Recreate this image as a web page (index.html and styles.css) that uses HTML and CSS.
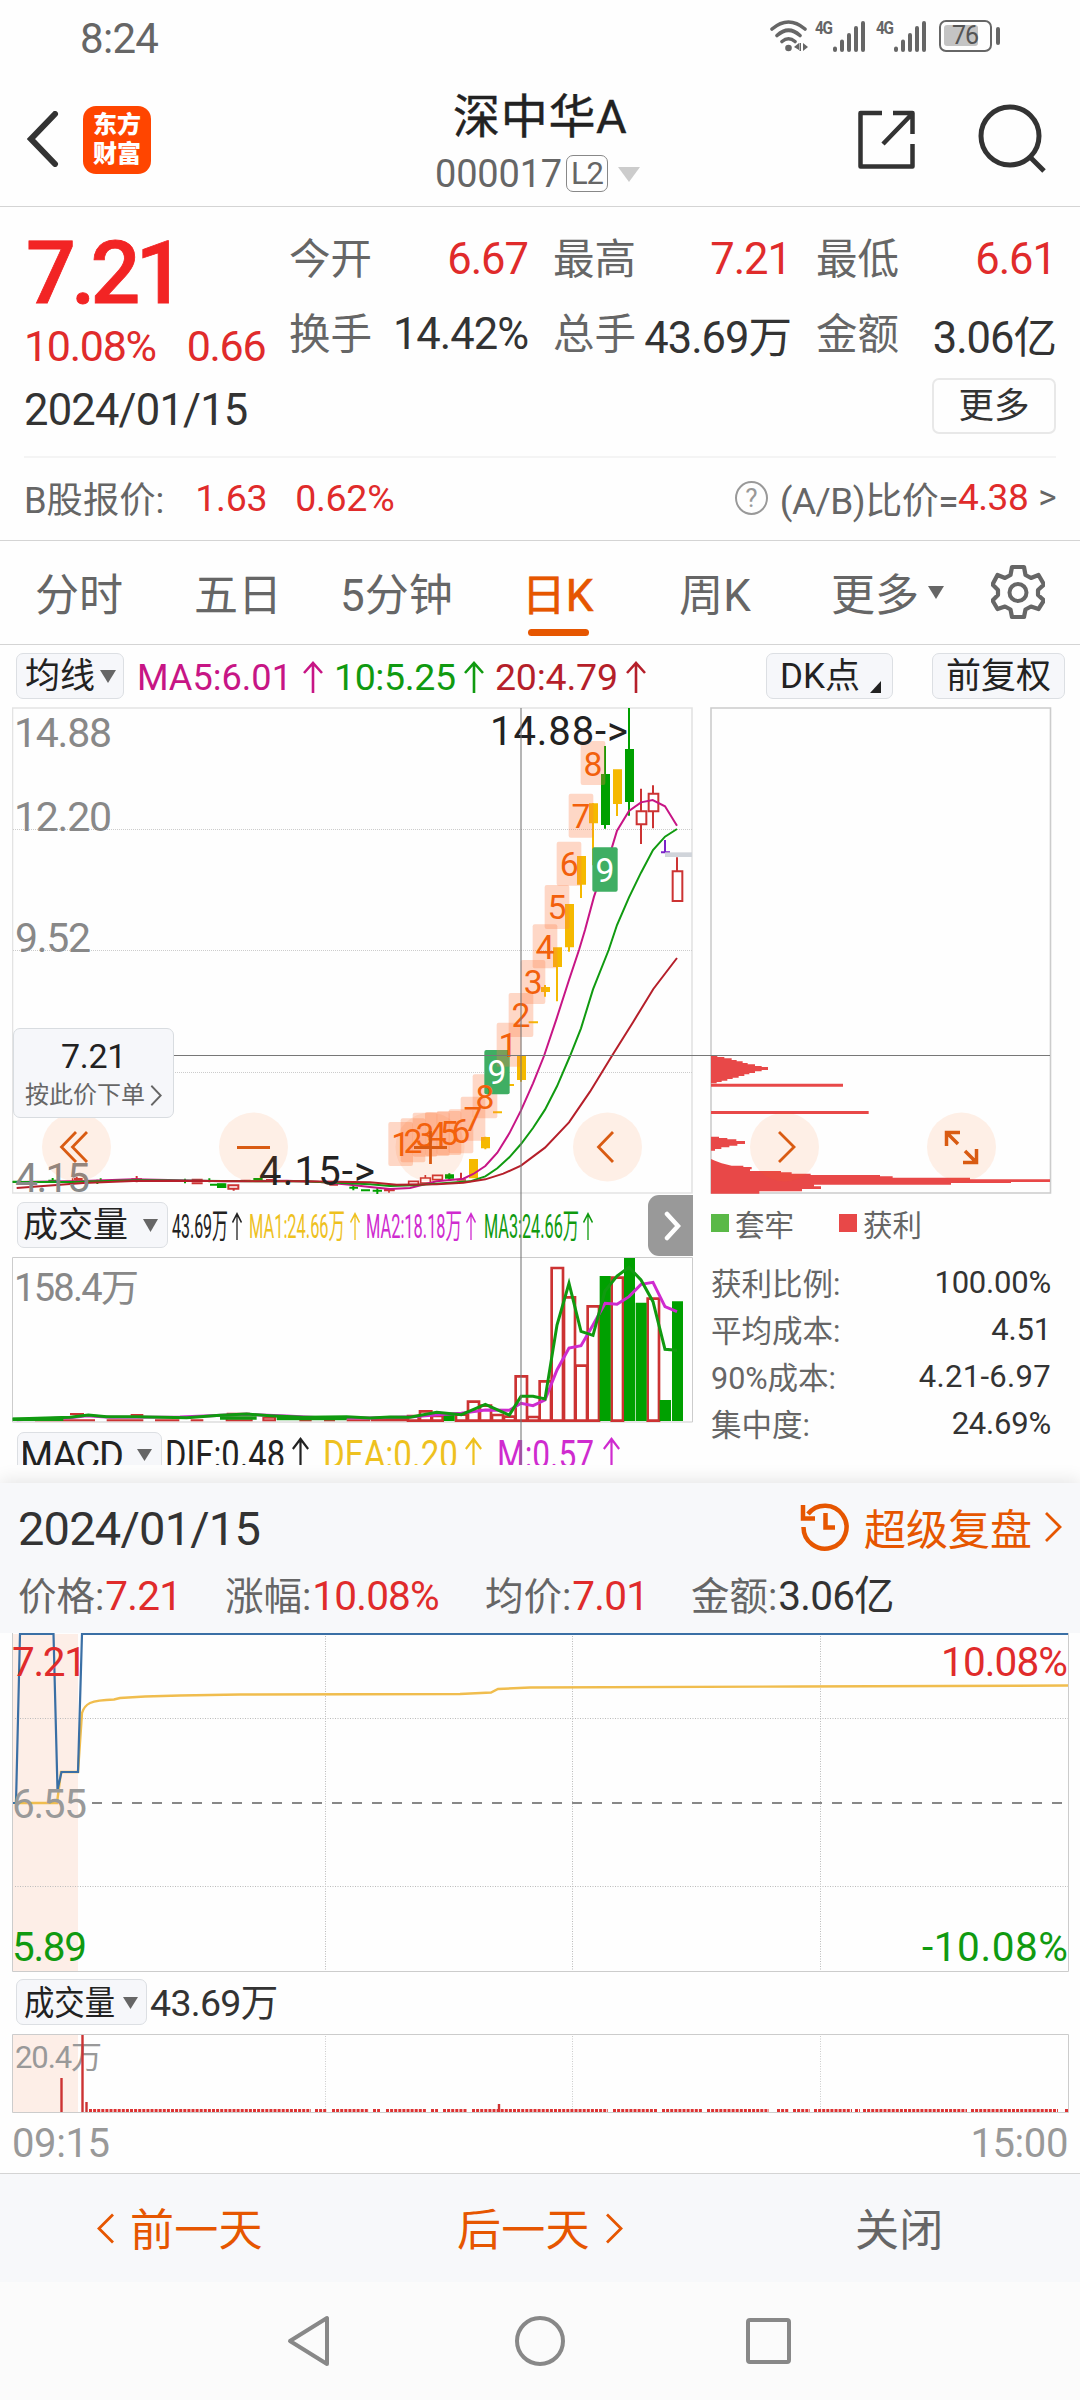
FILE: index.html
```html
<!DOCTYPE html>
<html lang="zh-CN">
<head>
<meta charset="utf-8">
<meta name="viewport" content="width=1080">
<title>深中华A 000017</title>
<link rel="stylesheet" href="styles.css">
</head>
<body>
<svg class="defs" width="0" height="0">
  <symbol id="up" viewBox="0 0 20 32" preserveAspectRatio="none"><path d="M10 32V2M1 12L10 2L19 12" fill="none" stroke="currentColor" stroke-width="2.6"/></symbol>
  <symbol id="next" viewBox="0 0 18 30"><path d="M2 1L16 15L2 29" fill="none" stroke="currentColor" stroke-width="2.8"/></symbol>
  <symbol id="signal" viewBox="0 0 34 32"><path d="M3 28.5V30M10 21.500V30M17 15V30M24 8V30M31 3V30" fill="none" stroke="#666" stroke-width="4" stroke-linecap="round"/></symbol>
</svg>

<header class="status">
  <span class="clock">8:24</span>
  <div class="status-icons">
    <svg width="40" height="34" viewBox="0 0 40 34"><g fill="none" stroke="#666" stroke-width="3.600" stroke-linecap="round"><path d="M3 10Q19.500 -4 36 10M8 16.500Q19.500 6 31 16.500M13 22.500Q19.500 17 26 22.500"/></g><circle cx="19.500" cy="29" r="3.300" fill="#666"/><path d="M25 28L30 24V31ZM39 28L34 24V32ZM30.500 24H32V32H30.500Z" fill="#666"/></svg>
    <span class="net">4G</span>
    <svg class="bars" width="34" height="32"><use href="#signal"/></svg>
    <span class="net second">4G</span>
    <svg class="bars" width="34" height="32"><use href="#signal"/></svg>
    <span class="battery"><span>76</span></span>
  </div>
</header>

<nav class="titlebar">
  <svg class="back" width="32" height="56" viewBox="0 0 32 56"><path d="M28 3L4 28L28 53" fill="none" stroke="#333" stroke-width="6" stroke-linecap="round"/></svg>
  <div class="logo">东方<br>财富</div>
  <div class="stock">
    <h1>深中华A</h1>
    <div class="code"><span>000017</span><i>L2</i><svg width="22" height="15"><path d="M0 0H22L11 15Z" fill="#ccc"/></svg></div>
  </div>
  <svg class="share" width="60" height="60" viewBox="0 0 60 60"><path d="M25 3H3.500V56.500H55.500V34M36 3H55.500V24M55 4L26 34" fill="none" stroke="#333" stroke-width="4.500" stroke-linejoin="round"/></svg>
  <svg class="search" width="72" height="72" viewBox="0 0 72 72"><circle cx="32" cy="32" r="29" fill="none" stroke="#333" stroke-width="5"/><path d="M52 53L66 67" stroke="#333" stroke-width="5"/></svg>
</nav>

<section class="quote">
  <div class="quote-top">
    <div class="price">
      <strong>7.21</strong>
      <div class="change"><span>10.08%</span><span>0.66</span></div>
    </div>
    <dl class="stats">
      <div><dt>今开</dt><dd class="red">6.67</dd></div>
      <div><dt>最高</dt><dd class="red">7.21</dd></div>
      <div><dt>最低</dt><dd class="red">6.61</dd></div>
      <div><dt>换手</dt><dd>14.42%</dd></div>
      <div><dt>总手</dt><dd>43.69万</dd></div>
      <div><dt>金额</dt><dd>3.06亿</dd></div>
    </dl>
  </div>
  <div class="date-row"><span>2024/01/15</span><button>更多</button></div>
  <div class="b-row">
    <span class="b-label">B股报价:</span><span class="red b-price">1.63</span><span class="red">0.62%</span>
    <span class="ratio"><i>?</i>(A/B)比价=<b>4.38</b><em>&gt;</em></span>
  </div>
</section>

<nav class="tabs">
  <span>分时</span><span>五日</span><span>5分钟</span><span class="active">日K</span><span>周K</span>
  <span class="more">更多<svg width="16" height="13"><path d="M0 0H16L8 13Z" fill="#666"/></svg></span>
  <svg class="gear" width="54" height="56" viewBox="0 0 54 56"><path d="M21 3H33L34.500 11L40 14L47.500 11L53 20.500L47 26V31L53 36.500L47.500 45L40 42.500L34.500 45.500L33 53H21L19.500 45.500L14 42.500L6.500 45L1.500 36.500L7 31V26L1.500 20.500L6.500 11L14 14L19.500 11Z" fill="none" stroke="#666" stroke-width="4.200" stroke-linejoin="round"/><circle cx="27" cy="28.500" r="8.500" fill="none" stroke="#666" stroke-width="4"/></svg>
</nav>

<div class="ma-bar">
  <button class="chip ma-chip">均线<svg width="16" height="13"><path d="M0 0H16L8 13Z" fill="#666"/></svg></button>
  <svg class="ma-values" width="520" height="62" viewBox="139 645 520 62" font-size="37.500">
    <g fill="#c71585" color="#c71585"><text x="137" y="690" textLength="155" lengthAdjust="spacingAndGlyphs">MA5:6.01</text><use href="#up" x="303" y="661" width="20" height="32"/></g>
    <g fill="#109a10" color="#109a10"><text x="334" y="690" textLength="122">10:5.25</text><use href="#up" x="464" y="661" width="20" height="32"/></g>
    <g fill="#b51f2a" color="#b51f2a"><text x="495" y="690" textLength="123">20:4.79</text><use href="#up" x="626" y="661" width="20" height="32"/></g>
  </svg>
  <button class="chip dk-chip">DK点<svg width="11" height="12"><path d="M11 0V12H0Z" fill="#222"/></svg></button>
  <button class="chip fq-chip">前复权</button>
</div>

<section class="kline">
  <div class="left">
    <svg class="candles" width="681" height="487" viewBox="12 707 681 487">
      <path d="M12.500 708H692V1193H12.500Z" fill="none" stroke="#e3e3e3" stroke-width="1.600"/>
      <path d="M13 829.500H692M13 950.500H692M13 1072.500H692" stroke="#ccc" stroke-dasharray="1 1"/>
      <g transform="translate(370 950) scale(.33333)">
        <g stroke-width="6">
          <path d="M705 -612V-364M777 -726V-403" stroke="#00a000"/>
          <path d="M741 -540V-402M669 -440V-254M633 -280V-156M597 -130V5M561 0V154M525 105V140M453 320V395M346 560V598M476 217H504M417 405H432M369 487H396" stroke="#f5b900"/>
          <path d="M813 -484V-417M813 -376V-318M849 -494V-470M849 -416V-365M921 -278V-235M273 668V690" stroke="#c33"/>
          <path d="M885 -330V-292M873 -293H900" stroke="#7b22c9" stroke-width="6"/>
        </g>
        <path d="M885 -293H966V-279H885Z" fill="#d0d4da"/>
        <path d="M693 -528H720V-375H693ZM765 -603H792V-444H765Z" fill="#00a000"/>
        <path d="M729 -542H756V-438H729ZM657 -440H684V-380H657ZM621 -282H648V-196H621ZM585 -138H612V-8H585ZM549 -8H576V51H549ZM513 111H540V126H513ZM441 316H468V390H441ZM333 561H360V595H333ZM297 627H324V685H297Z" fill="#f5b900"/>
        <path d="M800 -416H829V-377H800ZM836 -469H865V-416H836ZM908 -236H937V-147H908Z" fill="#fff" stroke="#c33" stroke-width="6"/>
        <g fill="none" stroke="#c33" stroke-width="5"><path d="M116 694H145V704H116ZM152 684H181V699H152ZM188 676H217V689H188ZM166 675V684M260 690H288M42 721H74M57 717V728M-892 685V700"/></g>
        <path d="M225 673H252V686H225ZM-459 700H-431V714H-459Z" fill="#00a000"/>
        <path d="M-1072 695H-1045M-965 692H-940M-952 684V698M-818 689V702M-808 685V698M-855 694H-834M-570 693H-540M-555 686V700M-482 685V697M-350 687H-322M-480 704H-435M-62 713H-36M-50 705V721M-27 721H0M8 722H36M22 714V732M238 670V690" stroke="#00a000" stroke-width="6"/>
        <path d="M-888 687H-862M-880 680V694M-716 688H-684M-700 678V697M-535 689H-502M-535 700H-502M-425 706H-395V716H-425ZM-409 718V722M-388 692H-358M-312 690H-282M-124 697H-94M-122 704H-96M43 720H73" fill="none" stroke="#c33" stroke-width="6"/>
        <g fill="none" stroke-width="6">
          <path d="M-1060 696L-860 693L-710 688L-570 691L-440 694L-250 692L-150 696L-60 704L0 711L60 717L120 714L200 694L280 686L310 672L346 648L382 608L418 550L453 481L489 400L522 318L560 205L597 90L627 0L645 -60L672 -160L700 -242L725 -305L741 -358L777 -417L813 -443L848 -450L885 -431L921 -373" stroke="#c71585"/>
          <path d="M-1072 696H-900L-700 691L-440 693L-200 694L0 703L60 708L130 706L220 700L300 694L346 679L382 655L418 622L453 582L489 534L525 479L561 409L600 318L633 235L669 118L716 0L741 -75L777 -158L813 -232L849 -300L885 -340L921 -363" stroke="#109a10"/>
          <path d="M-1060 714L-860 699L-710 693H-500L-200 694L0 697L80 704L200 703L280 698L346 688L400 671L453 647L525 593L597 517L660 425L727 316L790 215L850 117L921 24" stroke="#b51f2a"/>
        </g>
        <g fill="#ff7f45" fill-opacity=".3">
          <rect x="55" y="516" width="74" height="132" rx="6"/><rect x="92" y="505" width="74" height="132" rx="6"/><rect x="128" y="488" width="74" height="132" rx="6"/><rect x="165" y="486" width="74" height="132" rx="6"/><rect x="200" y="483" width="74" height="132" rx="6"/><rect x="236" y="478" width="74" height="132" rx="6"/><rect x="272" y="440" width="74" height="132" rx="6"/><rect x="308" y="373" width="74" height="132" rx="6"/><rect x="380" y="218" width="74" height="132" rx="6"/><rect x="416" y="129" width="74" height="132" rx="6"/><rect x="452" y="30" width="74" height="132" rx="6"/><rect x="488" y="-77" width="74" height="132" rx="6"/><rect x="524" y="-195" width="74" height="132" rx="6"/><rect x="560" y="-325" width="74" height="132" rx="6"/><rect x="596" y="-469" width="74" height="132" rx="6"/><rect x="632" y="-627" width="74" height="132" rx="6"/>
        </g>
        <g fill="#3fae63"><rect x="343" y="300" width="76" height="133" rx="6"/><rect x="667" y="-308" width="76" height="133" rx="6"/></g>
        <rect x="380" y="300" width="38" height="50" fill="#ff7f45" fill-opacity=".3"/>
        <g fill="#f2600c" font-size="101" text-anchor="middle">
          <text x="92" y="617">1</text><text x="129" y="608">2</text><text x="165" y="590">3</text><text x="202" y="588">4</text><text x="237" y="586">5</text><text x="273" y="580">6</text><text x="309" y="542">7</text><text x="345" y="476">8</text><text x="414" y="320">1</text><text x="453" y="232">2</text><text x="490" y="133">3</text><text x="525" y="26">4</text><text x="561" y="-92">5</text><text x="598" y="-222">6</text><text x="633" y="-366">7</text><text x="669" y="-523">8</text>
          <text x="381" y="402" fill="#fff">9</text><text x="705" y="-205" fill="#fff">9</text>
        </g>
      </g>
      <g font-size="41" fill="#888">
        <text x="14" y="747" textLength="98">14.88</text><text x="14" y="831" textLength="98">12.20</text><text x="15" y="952" textLength="76">9.52</text><text x="15" y="1192" textLength="75">4.15</text>
      </g>
      <g font-size="40" fill="#222"><text x="490" y="745" textLength="138">14.88-&gt;</text><text x="259" y="1185" textLength="116">4.15-&gt;</text></g>
    </svg>

    <div class="indicator">
      <button class="chip vol-chip">成交量<svg width="15" height="13"><path d="M0 0H15L7.500 13Z" fill="#666"/></svg></button>
      <svg class="legend" width="430" height="46" viewBox="170 1202 430 46" font-size="34">
        <text x="172" y="1238" textLength="56" lengthAdjust="spacingAndGlyphs" fill="#222">43.69万</text><use href="#up" x="232" y="1212" width="10" height="28" color="#222"/>
        <text x="249" y="1238" textLength="96" lengthAdjust="spacingAndGlyphs" fill="#eec11f">MA1:24.66万</text><use href="#up" x="350" y="1212" width="10" height="28" color="#eec11f"/>
        <text x="366" y="1238" textLength="96" lengthAdjust="spacingAndGlyphs" fill="#cf2bcf">MA2:18.18万</text><use href="#up" x="466" y="1212" width="10" height="28" color="#cf2bcf"/>
        <text x="484" y="1238" textLength="95" lengthAdjust="spacingAndGlyphs" fill="#109a10">MA3:24.66万</text><use href="#up" x="583" y="1212" width="10" height="28" color="#109a10"/>
      </svg>
      <span class="expand"><svg width="17" height="30" viewBox="0 0 17 30"><path d="M3 3L14 15L3 27" fill="none" stroke="#fff" stroke-width="4.500" stroke-linecap="round"/></svg></span>
    </div>

    <svg class="volume" width="681" height="167" viewBox="12 1256 681 167">
      <path d="M12.500 1257.500H692.500V1422H12.500Z" fill="none" stroke="#ccc"/>
      <text x="14" y="1301" font-size="38" fill="#888" textLength="125">158.4万</text>
      <g transform="translate(370 1190) scale(.33333)">
        <g fill="#fff" stroke="#c33" stroke-width="8">
          <path d="M6 690H108V686H6ZM114 678H146V692H114ZM150 664H184V692H150ZM186 678H218V692H186ZM258 674H290V692H258ZM294 635H327V692H294ZM330 647H363V692H330ZM366 675H399V692H366ZM402 680H435V692H402ZM437 559H471V692H437ZM473 681H507V692H473ZM509 574H543V692H509ZM545 234H579V692H545ZM582 322H615V692H582ZM617 527H651V692H617ZM653 349H687V692H653ZM725 263H759V692H725ZM833 326H867V692H833Z"/>
          <path d="M-1005 691H-825M-790 691H-680M-645 691H-572M-538 691H-500M-430 683H-355V691H-430ZM-320 683H-285V691H-320ZM-212 691H-175M-138 691H-105M-70 691H0M-900 672H-858M-718 675H-680M-430 671H-360" fill="none" stroke-width="6"/>
        </g>
        <path d="M689 258H722V693H689ZM762 204H795V693H762ZM797 338H830V693H797ZM869 630H903V693H869ZM906 334H939V693H906ZM221 672H254V693H221Z" fill="#00a000"/>
        <g fill="none" stroke-width="9">
          <path d="M-1060 689L-900 683L-850 677L-780 682L-570 681L-370 673L-250 678L-150 683L0 684L130 680L202 674L274 670L346 660L418 661L453 640L489 647L525 630L561 540L597 474L633 467L669 405L705 340L741 343L777 320L813 283L849 277L885 350L921 365" stroke="#cf2bcf"/>
          <path d="M-1072 687L-900 682L-845 675L-790 680H-700L-550 683L-450 676L-370 672L-300 677L-200 682L-70 680L0 684L60 681L120 682L200 667L274 674L346 643L418 675L453 619H489L525 627L561 405L597 280L633 424L669 436L705 303L741 258L777 232L813 270L849 335L885 478L921 481" stroke="#109a10"/>
          <path d="M-1072 688H-920M-450 684H-340M-280 686H-70" stroke="#109a10" stroke-width="10"/>
        </g>
      </g>
    </svg>

    <div class="indicator macd">
      <button class="chip macd-chip"><svg width="136" height="44" viewBox="24 1433 136 44"><text x="21" y="1469" font-size="38" fill="#222" textLength="104">MACD</text><path d="M138 1449H153L145.500 1461Z" fill="#666"/></svg></button>
      <svg class="legend" width="460" height="46" viewBox="164 1432 460 46" font-size="38">
        <text x="164" y="1468" textLength="120" lengthAdjust="spacingAndGlyphs" fill="#222">DIF:0.48</text><use href="#up" x="291" y="1437" width="17" height="32" color="#222"/>
        <text x="322" y="1468" textLength="135" lengthAdjust="spacingAndGlyphs" fill="#eec11f">DEA:0.20</text><use href="#up" x="464" y="1437" width="17" height="32" color="#eec11f"/>
        <text x="496" y="1468" textLength="97" lengthAdjust="spacingAndGlyphs" fill="#cf2bcf">M:0.57</text><use href="#up" x="602" y="1437" width="17" height="32" color="#cf2bcf"/>
      </svg>
    </div>
  </div>

  <aside class="cost">
    <svg width="342" height="487" viewBox="710 707 342 487">
      <path d="M711 708H1050.500V1193H711Z" fill="none" stroke="#ccc" stroke-width="1.600"/>
      <g transform="translate(690 1000) scale(.33333)" fill="#e84848">
        <path d="M63 167H82V171H103V175H125V180H140V184H158V189H173V193H195V198H215V201H234V210H215V214H195V219H178V223H163V228H146V233H128V237H112V242H95V246H80V250H63ZM63 251H459V260H63ZM63 333H536V342H63ZM63 410H87V414H112V418H139V423H165V432H142V437H118V442H94V447H75V452H63ZM63 477L75 482L95 490L125 497H160V501H185V508H180V513H273V517H305V521H362V525H570V529H608V533H840V538H1080V546H963V549H783V554H372V559H393V567H336V574H208V581H63Z"/>
      </g>
    </svg>
    <div class="keys"><span class="key green">套牢</span><span class="key">获利</span></div>
    <dl>
      <div><dt>获利比例:</dt><dd>100.00%</dd></div>
      <div><dt>平均成本:</dt><dd>4.51</dd></div>
      <div><dt>90%成本:</dt><dd class="range">4.21-6.97</dd></div>
      <div><dt>集中度:</dt><dd>24.69%</dd></div>
    </dl>
  </aside>

  <svg class="overlay" width="1080" height="758" viewBox="0 707 1080 758">
    <path d="M521 708V1465" stroke="#777" stroke-opacity=".6" stroke-width="1.800"/>
    <path d="M13 1055.500H1050" stroke="#777"/>
    <g fill="#ff6a13" fill-opacity=".1"><circle cx="76.500" cy="1147" r="34.500"/><circle cx="253.500" cy="1147" r="34.500"/><circle cx="430" cy="1147" r="34.500"/><circle cx="607.500" cy="1147" r="34.500"/><circle cx="784.500" cy="1147" r="34.500"/><circle cx="961.500" cy="1147" r="34.500"/></g>
    <g fill="none" stroke="#d95b12" stroke-width="2.800">
      <path d="M76 1132L61.500 1147L76 1162M87 1132L72.500 1147L87 1162M237 1147.500H270M414 1147.500H447M430.500 1131V1164M613 1132L598.500 1147L613 1162M779 1132L794 1147L779 1162"/>
      <path d="M958 1144L947 1133M946.500 1146V1132.500H960M965 1151L976 1162M963 1162.500H976.500V1149" stroke-width="3.500"/>
    </g>
  </svg>
  <button class="order"><b>7.21</b><span>按此价下单<svg width="12" height="21" viewBox="0 0 18 30" preserveAspectRatio="none"><use href="#next"/></svg></span></button>
</section>

<section class="replay">
  <div class="replay-head">
    <div class="replay-title">
      <span>2024/01/15</span>
      <a><svg width="50" height="50" viewBox="0 0 50 50"><path d="M3.500 25A21.500 21.500 0 1 0 8 12" fill="none" stroke="#e65600" stroke-width="4.500"/><path d="M3 3V16.500H15M25.500 11V25.500H35" fill="none" stroke="#e65600" stroke-width="4.500"/></svg><span>超级复盘</span><svg width="18" height="30"><use href="#next"/></svg></a>
    </div>
    <div class="replay-data">
      <span>价格:<b class="red">7.21</b></span><span>涨幅:<b class="red">10.08%</b></span><span>均价:<b class="red">7.01</b></span><span>金额:<b>3.06亿</b></span>
    </div>
  </div>
  <svg class="intraday" width="1080" height="339" viewBox="0 1633 1080 339">
    <path d="M13 1634H78V1971H13Z" fill="#fdeee7"/>
    <path d="M12.500 1633V1971.500H1068.500V1633" fill="none" stroke="#ccc"/>
    <path d="M15 1718.500H1068M15 1886.500H1068M325.500 1636V1971M572.500 1636V1971M820.500 1636V1971" stroke="#bbb" stroke-dasharray="1 1.500"/>
    <path d="M92 1803H1064" stroke="#888" stroke-width="2" stroke-dasharray="10 10"/>
    <path d="M16 1803H57L61 1772H78L82 1713Q84 1706 90 1703Q97 1700 114 1699.500L120 1698L145 1696.500L180 1695.500L240 1694.500L460 1694L491 1692.500L498 1689L530 1687.500L800 1686.500L1068 1685.500" fill="none" stroke="#f0bd4e" stroke-width="2.400"/>
    <path d="M13 1803H16L20 1634H53.500L57.500 1790L61.500 1772H78L82 1634H1068" fill="none" stroke="#3a6fa5" stroke-width="2.200"/>
    <g font-size="40.500"><text x="12" y="1676" textLength="75" fill="#e02b2b">7.21</text><text x="941" y="1676" textLength="127" fill="#e02b2b">10.08%</text><text x="12" y="1818" textLength="75" fill="#999">6.55</text><text x="12" y="1961" textLength="75" fill="#109a10">5.89</text><text x="922" y="1961" textLength="146" fill="#109a10">-10.08%</text></g>
  </svg>
  <div class="replay-vol">
    <button class="chip"><svg width="124" height="44" viewBox="20 1980 124 44"><text x="24" y="2015" font-size="34" fill="#222" textLength="91" lengthAdjust="spacingAndGlyphs">成交量</text><path d="M123 1997H138L130.500 2009Z" fill="#666"/></svg></button>
    <span>43.69万</span>
  </div>
  <svg class="minute-volume" width="1080" height="80" viewBox="0 2033 1080 80">
    <path d="M13 2034H78V2112H13Z" fill="#fdeee7"/>
    <path d="M12.500 2034.500H1068.500V2112.500H12.500Z" fill="none" stroke="#ccc"/>
    <path d="M325.500 2036V2112M572.500 2036V2112M820.500 2036V2112" stroke="#ccc" stroke-dasharray="1 1.500"/>
    <text x="15" y="2068" font-size="31" fill="#999" textLength="87">20.4万</text>
    <path d="M61.500 2078V2112M82.500 2035V2112M86.500 2102V2112M499 2104V2112" stroke="#c33" stroke-width="2.400"/>
    <path d="M89 2110.500H311M315 2110.500H327M332 2110.500H369M373 2110.500H380M386 2110.500H426M431 2110.500H438M443 2110.500H467M472 2110.500H608M613 2110.500H658M662 2110.500H703M707 2110.500H769M777 2110.500H789M793 2110.500H810M814 2110.500H852M855 2110.500H860M863 2110.500H967M971 2110.500H1058M1065 2110.500H1068" stroke="#d33" stroke-width="3" stroke-dasharray="3 1.100"/>
  </svg>
  <div class="times"><span>09:15</span><span>15:00</span></div>
</section>

<footer class="actions">
  <a class="prev"><svg class="flip" width="18" height="31"><use href="#next"/></svg><span>前一天</span></a>
  <a class="following"><span>后一天</span><svg width="18" height="31"><use href="#next"/></svg></a>
  <a class="close"><span>关闭</span></a>
</footer>

<div class="system-nav">
  <svg width="44" height="52" viewBox="0 0 44 52"><path d="M40 3V49L3 26Z" fill="none" stroke="#888" stroke-width="4" stroke-linejoin="round"/></svg>
  <svg width="52" height="52"><circle cx="26" cy="26" r="23" fill="none" stroke="#888" stroke-width="4"/></svg>
  <svg width="46" height="48"><rect x="2" y="3" width="41" height="42" rx="2" fill="none" stroke="#888" stroke-width="4"/></svg>
</div>
</body>
</html>
```

FILE: styles.css
```css
* { box-sizing: border-box; }
body { margin: 0; width: 1080px; height: 2400px; overflow: hidden; background: #fefefe; color: #333; font-family: Roboto, "Noto Sans CJK SC", sans-serif; display: flex; flex-direction: column; }
svg { display: block; flex: none; }
.defs { position: absolute; }
button { font: inherit; color: #222; background: none; margin: 0; padding: 0; }
i, em { font-style: normal; }
dl, dd, h1 { margin: 0; }
.red, b.red { color: #e02b2b; }

.status { height: 72px; flex: none; display: flex; justify-content: space-between; padding: 0 81px 0 80px; align-items: center; color: #666; }
.clock { font-size: 42px; line-height: 44px; padding-top: 5px; letter-spacing: -.7px; }
.status-icons { display: flex; align-items: flex-start; height: 34px; }
.status-icons > svg:first-child { margin-right: 6px; }
.net { width: 17px; font-size: 18px; font-weight: 700; line-height: 15px; letter-spacing: -1.500px; padding-top: 1px; transform: scaleX(.85); transform-origin: left; }
.bars { margin-top: 1px; }
.second { margin-left: 10px; }
.battery { position: relative; width: 53px; height: 32px; margin: 1px 7px 0 12px; border: 2.500px solid #666; border-radius: 7px; padding: 3px; }
.battery span { display: block; width: 34px; height: 21px; background: #c4c4c4; border-radius: 3px; color: #555; font-size: 25px; line-height: 22px; padding-left: 8px; letter-spacing: -1px; }
.battery::after { content: ""; position: absolute; right: -10px; top: 5px; width: 4px; height: 18px; border-radius: 2px; background: #666; }

.titlebar { height: 135px; flex: none; display: flex; align-items: flex-start; border-bottom: 1px solid #d4d4d4; padding-left: 27px; }
.back { margin-top: 39px; }
.logo { width: 68px; height: 68px; margin: 34px 0 0 24px; border-radius: 13px; background: #ff4500; color: #fff; text-align: center; font-weight: 900; font-size: 24px; line-height: 29px; padding-top: 5px; }
.stock { width: 260px; margin-left: 275px; }
h1 { font-size: 47px; line-height: 56px; font-weight: 400; color: #222; padding: 17px 0 0 27px; white-space: nowrap; letter-spacing: .7px; -webkit-text-stroke: .4px #222; }
.code { display: flex; align-items: center; margin: 7px 0 0 9px; color: #666; height: 44px; }
.code span { font-size: 38px; letter-spacing: -.2px; }
.code i { width: 42px; height: 37px; border: 1.500px solid #888; border-radius: 7px; font-size: 31px; line-height: 35px; text-align: center; margin: -1px 10px 0 4px; letter-spacing: -1px; }
.share { margin: 38px 0 0 171px; }
.search { margin: 32px 0 0 61px; }

.quote { height: 334px; flex: none; border-bottom: 1px solid #d4d4d4; padding: 0 24px; }
.quote-top { height: 168px; display: flex; }
.price { width: 265px; color: #f22424; flex: none; }
.price strong { display: block; font-size: 88px; line-height: 96px; font-weight: 500; letter-spacing: -5px; margin-top: 18px; padding-left: 2px; height: 96px; -webkit-text-stroke: .8px #f22424; }
.change { display: flex; font-size: 43px; line-height: 52px; color: #e02b2b; gap: 31px; letter-spacing: -1.300px; margin-top: -1px; }
.stats { flex: 1; display: grid; grid-template-columns: 239px 263px 265px; grid-template-rows: 75px 75px; column-gap: 0; padding-top: 15px; }
.stats div { display: flex; justify-content: space-between; align-items: center; white-space: nowrap; }
.stats div:nth-child(3n+2), .stats div:nth-child(3n) { padding-left: 25px; }
.stats dt { font-size: 41.500px; color: #666; margin: -6px 0 1px; }
.stats dd { font-size: 43.500px; letter-spacing: -1px; }
.date-row { display: flex; justify-content: space-between; height: 83px; border-bottom: 2px solid #f4f4f4; font-size: 43.500px; line-height: 71px; letter-spacing: -.8px; }
.date-row button { width: 124px; height: 56px; margin-top: 3px; border: 2px solid #e8e8e8; border-radius: 7px; font-size: 35.500px; line-height: 50px; letter-spacing: 0; color: #333; }
.b-row { height: 80px; display: flex; align-items: center; font-size: 37.500px; white-space: nowrap; letter-spacing: -.3px; color: #666; }
.b-label { font-size: 36.300px; letter-spacing: 0; margin-top: -3px; }
.b-price { margin: 0 28px 0 31px; }
.ratio { margin-left: auto; display: flex; align-items: center; font-size: 37px; letter-spacing: -.5px; margin-top: -1px; }
.ratio i { width: 33px; height: 34px; border: 2.500px solid #999; border-radius: 50%; margin-right: 12px; font-size: 26px; line-height: 30px; text-align: center; color: #999; }
.ratio b { font-weight: 400; color: #e02b2b; }
.ratio em { margin-left: 10px; font-size: 35px; }

.tabs { height: 104px; flex: none; display: flex; align-items: center; border-bottom: 1px solid #d4d4d4; font-size: 44px; color: #666; padding-left: 35px; line-height: 64px; }
.tabs > span { white-space: nowrap; position: relative; top: 3px; }
.tabs > span:nth-child(2) { margin-left: 71px; }
.tabs > span:nth-child(3) { margin-left: 58px; }
.tabs > span:nth-child(4) { margin-left: 69px; }
.tabs > span:nth-child(5) { margin-left: 86px; }
.tabs .active { color: #e65600; -webkit-text-stroke: .6px #e65600; }
.active::after { content: ""; position: absolute; left: 6px; bottom: -8px; width: 61px; height: 7px; border-radius: 4px; background: #e65600; }
.tabs .more { margin-left: 80px; display: flex; align-items: center; }
.more svg { margin-left: 9px; margin-top: -6px; }
.gear { margin-left: 47px; margin-top: -2px; }

.chip { height: 46px; border: 1.500px solid #dcdfe3; border-radius: 7px; background: #f6f7fa; font-size: 35px; line-height: 40px; display: flex; align-items: center; white-space: nowrap; flex: none; }
.ma-bar { height: 62px; flex: none; display: flex; padding-left: 16px; align-items: flex-start; }
.ma-bar .chip { margin-top: 8px; padding-top: 1px; }
.ma-chip { width: 108px; padding-left: 8px; }
.ma-chip svg { margin-left: 5px; }
.ma-values { margin-left: 15px; overflow: visible; }
.dk-chip { width: 127px; margin-left: 107px; padding-left: 13px; }
.dk-chip svg { margin: 21px 0 0 10px; }
.fq-chip { width: 133px; margin-left: 39px; justify-content: center; }

.kline { height: 758px; flex: none; display: flex; position: relative; overflow: hidden; }
.left { width: 693px; flex: none; }
.candles, .volume { margin-left: 12px; }
.indicator { height: 62px; display: flex; padding: 8px 0 0 17px; }
.vol-chip { width: 151px; padding: 1px 0 0 5px; }
.vol-chip svg { margin-left: 15px; }
.legend { margin-left: 2px; overflow: visible; }
.expand { width: 45px; height: 61px; margin: -7px 0 0 48px; background: #999; border-radius: 11px 0 0 11px; display: flex; align-items: center; justify-content: center; padding-left: 3px; flex: none; }
.macd { padding-top: 9px; }
.macd-chip { width: 145px; padding-left: 5px; }
.macd .legend { margin-left: 3px; }
.cost { margin-left: 17px; width: 342px; }
.keys { display: flex; height: 58px; align-items: center; font-size: 29.500px; color: #666; padding-left: 1px; }
.key { display: flex; align-items: center; width: 128px; }
.key::before { content: ""; width: 18px; height: 18px; margin-right: 6px; background: #e84848; }
.key.green::before { background: #5ab947; }
.cost dl { font-size: 30.500px; color: #666; padding: 7px 1px 0 1px; }
.cost dl div { height: 47px; display: flex; justify-content: space-between; align-items: center; }
.cost dt { margin-top: -2px; }
.cost dd { color: #333; letter-spacing: -.2px; font-size: 31px; }
.cost .range { letter-spacing: .3px; }
.overlay { position: absolute; left: 0; top: 0; }
.order { position: absolute; left: 13px; top: 321px; width: 161px; height: 90px; border: 1.500px solid #d8dce0; border-radius: 7px; background: #f6f7fa; display: flex; flex-direction: column; align-items: center; }
.order b { font-weight: 400; font-size: 34px; line-height: 38px; margin-top: 8px; letter-spacing: -.3px; }
.order span { display: flex; align-items: center; font-size: 24px; line-height: 34px; color: #666; gap: 5px; margin-top: 3px; }

.replay { flex: none; height: 708px; padding-top: 18px; background: #fefefe; display: flex; flex-direction: column; }
.replay-head { height: 150px; background: #f7f8fa; box-shadow: 0 -4px 16px rgba(0, 0, 0, .09); clip-path: inset(-18px 0 0 0); padding: 0 18px; flex: none; }
.replay-title { height: 91px; display: flex; align-items: center; justify-content: space-between; font-size: 47px; letter-spacing: -.8px; }
.replay-title a { display: flex; align-items: center; color: #e65600; font-size: 42px; letter-spacing: 0; height: 86px; margin-top: -4px; }
.replay-title a span { margin: 0 12px 0 14px; }
.replay-data { display: flex; font-size: 38.500px; line-height: 44px; color: #666; white-space: nowrap; }
.replay-data span:nth-child(1) { width: 207px; }
.replay-data span:nth-child(2) { width: 260px; }
.replay-data span:nth-child(3) { width: 206px; }
.replay-data b { font-weight: 400; font-size: 40.500px; letter-spacing: -.8px; color: #333; margin-left: 1px; }
.replay-data b.red { color: #e02b2b; }
.replay-vol { display: flex; height: 61px; flex: none; padding: 7px 0 0 16px; }
.replay-vol .chip { width: 131px; padding-left: 3px; }
.replay-vol > span { font-size: 37.500px; line-height: 48px; margin-left: 3px; letter-spacing: -.7px; }
.times { display: flex; justify-content: space-between; height: 60px; flex: none; padding: 0 12px; font-size: 40px; line-height: 62px; letter-spacing: -.4px; color: #999; }

.actions { height: 109px; flex: none; display: flex; align-items: center; background: #f7f8fa; border-top: 1px solid #d4d4d4; font-size: 44px; line-height: 60px; color: #e65600; }
.actions a { display: flex; align-items: center; }
.actions span { padding-top: 5px; letter-spacing: .2px; }
.flip { transform: scaleX(-1); }
.prev { margin-left: 97px; gap: 15px; width: 360px; }
.following { gap: 15px; width: 398px; }
.close { color: #666; }
.system-nav { height: 118px; flex: none; background: #fbfbfb; display: flex; align-items: center; padding-left: 287px; }
.system-nav svg:nth-child(2) { margin-left: 183px; }
.system-nav svg:nth-child(3) { margin-left: 180px; }
```
